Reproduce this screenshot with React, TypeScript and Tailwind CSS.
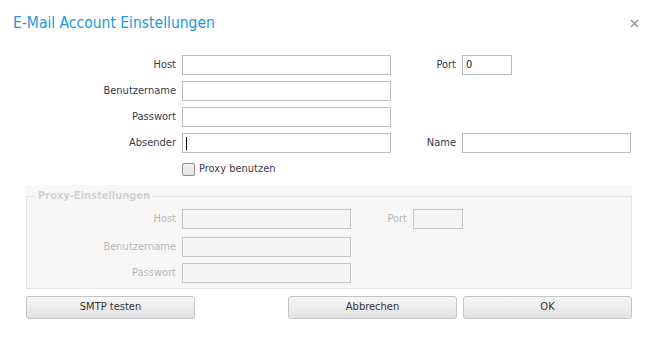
import React from "react";

const FONT = { fontFamily: '"DejaVu Sans Condensed", "DejaVu Sans", Tahoma, sans-serif' };

function Label({ children, w, disabled }: { children: React.ReactNode; w: string; disabled?: boolean }) {
  return (
    <div className={`${w} shrink-0 pr-[6px] text-right text-[11px] leading-[20px] ${disabled ? "text-[#b8b8b8]" : "text-[#3a3a4a]"}`}>
      {children}
    </div>
  );
}

function Field({ w, disabled, children }: { w: string; disabled?: boolean; children?: React.ReactNode }) {
  return (
    <div
      className={`${w} h-[20px] shrink-0 border flex items-center px-[3px] text-[11px] ${
        disabled ? "border-[#c6c6c6] bg-[#f4f4f4]" : "border-[#bdbdbd] bg-white text-[#222]"
      }`}
    >
      {children}
    </div>
  );
}

function Button({ children, className = "" }: { children: React.ReactNode; className?: string }) {
  return (
    <button
      className={`w-[169px] h-[23px] shrink-0 rounded-[3px] border border-[#c4c4c4] bg-gradient-to-b from-[#f7f7f7] to-[#e2e2e2] text-[11px] text-[#333] ${className}`}
    >
      {children}
    </button>
  );
}

export default function App() {
  return (
    <div className="w-[658px] h-[345px] bg-white overflow-hidden" style={FONT}>
      {/* Kopfzeile */}
      <div className="flex items-center justify-between pl-[13px] pr-[19px] pt-[13px] h-[33px]">
        <h1 className="text-[15.5px] leading-[20px] text-[#1b98e0]">E-Mail Account Einstellungen</h1>
        <svg width="9" height="9" viewBox="0 0 9 9" className="mt-[1px]">
          <path d="M1 1 L8 8 M8 1 L1 8" stroke="#9a9a9a" strokeWidth="1.6" />
        </svg>
      </div>

      {/* Hauptfelder */}
      <div className="mt-[22px] flex flex-col gap-[6px]">
        <div className="flex items-center">
          <Label w="w-[182px]">Host</Label>
          <Field w="w-[209px]" />
          <Label w="w-[71px]">Port</Label>
          <Field w="w-[50px]">0</Field>
        </div>
        <div className="flex items-center">
          <Label w="w-[182px]">Benutzername</Label>
          <Field w="w-[209px]" />
        </div>
        <div className="flex items-center">
          <Label w="w-[182px]">Passwort</Label>
          <Field w="w-[209px]" />
        </div>
        <div className="flex items-center">
          <Label w="w-[182px]">Absender</Label>
          <Field w="w-[209px]">
            <span className="block w-px h-[13px] bg-black" />
          </Field>
          <Label w="w-[71px]">Name</Label>
          <Field w="w-[169px]" />
        </div>
      </div>

      <div className="mt-[10px] pl-[182px] flex items-center h-[13px]">
        <span className="w-[13px] h-[13px] border border-[#8e8e8e] rounded-[2px] bg-gradient-to-b from-[#f2f2f2] to-[#e4e4e4]" />
        <span className="ml-[4px] text-[11px] text-[#3a3a4a]">Proxy benutzen</span>
      </div>

      {/* Proxy-Gruppe (deaktiviert) */}
      <div className="mt-[9px] ml-[26px] w-[606px] h-[104px] bg-[#f7f7f7] pt-[4px]">
        <fieldset className="h-[100px] border border-[#e4e4e4] px-0">
          <legend className="ml-[8px] px-[3px] text-[11px] leading-[14px] font-bold text-[#d2d2d2]">
            Proxy-Einstellungen
          </legend>
          <div className="mt-[6px] flex items-center">
            <Label w="w-[155px]" disabled>Host</Label>
            <Field w="w-[169px]" disabled />
            <Label w="w-[62px]" disabled>Port</Label>
            <Field w="w-[50px]" disabled />
          </div>
          <div className="mt-[8px] flex items-center">
            <Label w="w-[155px]" disabled>Benutzername</Label>
            <Field w="w-[169px]" disabled />
          </div>
          <div className="mt-[6px] flex items-center">
            <Label w="w-[155px]" disabled>Passwort</Label>
            <Field w="w-[169px]" disabled />
          </div>
        </fieldset>
      </div>

      {/* Schaltflächen */}
      <div className="mt-[7px] ml-[26px] w-[606px] flex">
        <Button>SMTP testen</Button>
        <Button className="ml-auto">Abbrechen</Button>
        <Button className="ml-[6px]">OK</Button>
      </div>
    </div>
  );
}
